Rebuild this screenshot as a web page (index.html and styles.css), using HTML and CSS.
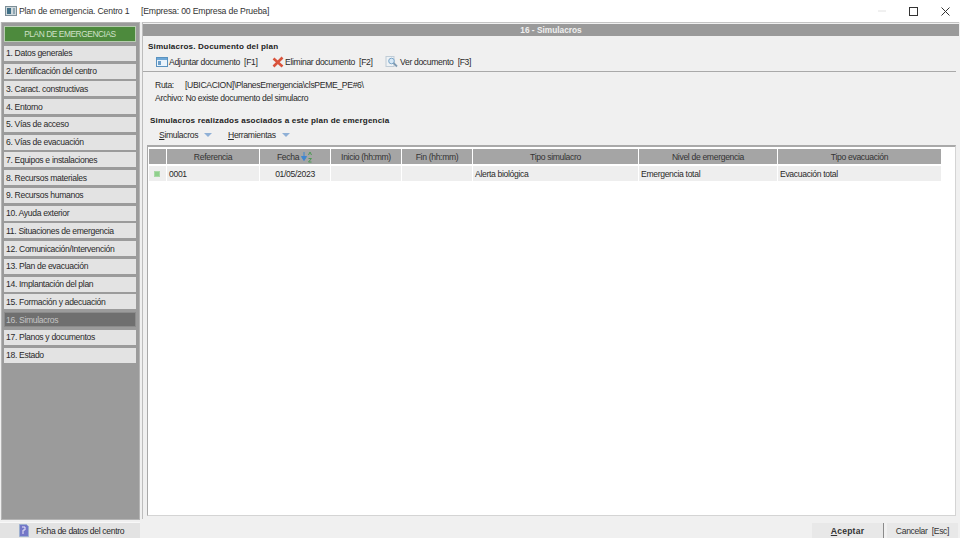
FILE: index.html
```html
<!DOCTYPE html>
<html lang="es">
<head>
<meta charset="utf-8">
<title>Plan de emergencia</title>
<link rel="stylesheet" href="styles.css">
</head>
<body>
<div class="window">
  <header class="titlebar">
    <svg class="appicon" width="12" height="12" viewBox="0 0 12 12"><rect x=".5" y="1.500" width="11" height="9" fill="#cfd8dc" stroke="#7d8f98"/><rect x="2" y="3" width="4" height="6" fill="#3f6f86"/><rect x="8" y="3" width="2" height="6" fill="#8fa7b3"/></svg>
    <span class="t-name">Plan de emergencia. Centro 1</span>
    <span class="t-company">[Empresa: 00 Empresa de Prueba]</span>
    <div class="winctl">
      <svg class="ctl" width="8" height="8" viewBox="0 0 8 8"><path d="M0 4h8" stroke="#e2e2e2"/></svg>
      <svg class="ctl" width="9" height="9" viewBox="0 0 9 9"><rect x=".5" y=".5" width="8" height="8" fill="none" stroke="#333"/></svg>
      <svg class="ctl" width="9" height="9" viewBox="0 0 9 9"><path d="M.5 .5l8 8M8.500 .5l-8 8" stroke="#333" fill="none"/></svg>
    </div>
  </header>
  <div class="content">
    <nav class="sidebar">
      <div class="navhead">PLAN DE EMERGENCIAS</div>
      <div class="navitem">1. Datos generales</div>
      <div class="navitem">2. Identificación del centro</div>
      <div class="navitem">3. Caract. constructivas</div>
      <div class="navitem">4. Entorno</div>
      <div class="navitem">5. Vías de acceso</div>
      <div class="navitem">6. Vías de evacuación</div>
      <div class="navitem">7. Equipos e instalaciones</div>
      <div class="navitem">8. Recursos materiales</div>
      <div class="navitem">9. Recursos humanos</div>
      <div class="navitem">10. Ayuda exterior</div>
      <div class="navitem">11. Situaciones de emergencia</div>
      <div class="navitem">12. Comunicación/Intervención</div>
      <div class="navitem">13. Plan de evacuación</div>
      <div class="navitem">14. Implantación del plan</div>
      <div class="navitem">15. Formación y adecuación</div>
      <div class="navitem active">16. Simulacros</div>
      <div class="navitem">17. Planos y documentos</div>
      <div class="navitem">18. Estado</div>
    </nav>
    <main class="panel">
      <div class="panelhead">16 - Simulacros</div>
      <h2 class="sec sec1">Simulacros. Documento del plan</h2>
      <div class="toolbar">
        <span class="tool t1"><svg width="12" height="12" viewBox="0 0 12 12"><rect x=".5" y="1.500" width="11" height="9" fill="#eaf3fb" stroke="#5a92bf"/><rect x="1" y="2" width="10" height="2" fill="#6ea8d8"/><rect x="2" y="5" width="3" height="4" fill="#6c9fca"/></svg>Adjuntar documento&nbsp; [F1]</span>
        <span class="tool t2"><svg width="12" height="12" viewBox="0 0 12 12"><path d="M1.500 2.500l9 8M10.500 1.500l-9 9" stroke="#d9533c" stroke-width="2.600" fill="none"/></svg>Eliminar documento&nbsp; [F2]</span>
        <span class="tool t3"><svg width="14" height="12" viewBox="0 0 14 12"><rect x="1" y="0.500" width="8" height="10" fill="#eef2f5" stroke="#c0ccd6"/><circle cx="6.500" cy="5" r="2.800" fill="#d8e9f7" stroke="#7aa5c8"/><path d="M8.500 7l3.500 3.500" stroke="#7f9bb3" stroke-width="1.800"/></svg>Ver documento&nbsp; [F3]</span>
      </div>
      <div class="info">
        <div class="inforow"><span class="lbl">Ruta:</span><span>[UBICACION]\PlanesEmergencia\clsPEME_PE#6\</span></div>
        <div class="inforow"><span>Archivo: No existe documento del simulacro</span></div>
      </div>
      <h2 class="sec sec2">Simulacros realizados asociados a este plan de emergencia</h2>
      <div class="menubar">
        <span class="menu m1"><u>S</u>imulacros<i class="caret"></i></span>
        <span class="menu m2"><u>H</u>erramientas<i class="caret"></i></span>
      </div>
      <section class="tablebox">
        <div class="grid">
          <div class="th"></div>
          <div class="th">Referencia</div>
          <div class="th">Fecha<svg class="sort" width="12" height="12" viewBox="0 0 12 12"><path d="M3 1v5M.5 5.500l2.500 4 2.500-4z" stroke="#3f86d0" fill="#3f86d0"/><path d="M7.500 4l1.500-3 1.500 3M7.500 7.500h3l-3 3.500h3" stroke="#4d9a55" fill="none"/></svg></div>
          <div class="th">Inicio (hh:mm)</div>
          <div class="th">Fin (hh:mm)</div>
          <div class="th">Tipo simulacro</div>
          <div class="th">Nivel de emergencia</div>
          <div class="th">Tipo evacuación</div>
          <div class="td mark"><i class="dot"></i></div>
          <div class="td">0001</div>
          <div class="td center">01/05/2023</div>
          <div class="td"></div>
          <div class="td"></div>
          <div class="td">Alerta biológica</div>
          <div class="td">Emergencia total</div>
          <div class="td">Evacuación total</div>
        </div>
      </section>
    </main>
  </div>
  <footer class="bottombar">
    <div class="ficha"><svg width="10" height="13" viewBox="0 0 10 13"><path d="M.5 .5h7l2 2v10h-9z" fill="#7478c8" stroke="#9db0d0"/><path d="M3 3h3v3h-2v4" stroke="#ece6f8" fill="none"/></svg>Ficha de datos del centro</div>
    <div class="spacer"></div>
    <button class="btn ok"><u>A</u>ceptar</button>
    <button class="btn cancel">Cancelar&nbsp; [Esc]</button>
  </footer>
</div>
</body>
</html>
```
FILE: styles.css
```css
* { box-sizing: border-box; }
html, body { margin: 0; padding: 0; }
body {
  width: 960px;
  height: 538px;
  overflow: hidden;
  background: #f0f0f0;
  color: #2a2a2a;
  font-family: "Liberation Sans", Arial, sans-serif;
  font-size: 8.6px;
  letter-spacing: -.33px;
}
.window { display: flex; flex-direction: column; height: 538px; }

.titlebar {
  height: 22px;
  flex: none;
  background: #fff;
  display: flex;
  align-items: center;
  padding-left: 5px;
  font-size: 8.7px;
  letter-spacing: -.18px;
  color: #333;
}
.appicon { margin-right: 2px; }
.t-name { width: 122px; }
.winctl { margin-left: auto; display: flex; align-items: center; gap: 23px; padding-right: 10px; }
.ctl { display: block; }

.content { flex: 1; display: flex; min-height: 0; background: #f0f0f0; padding-left: 1px; }

.sidebar {
  width: 139px;
  flex: none;
  background: #9b9b9b;
  border: 1px solid #b4b4b4;
  padding: 3px 3px 0 2px;
  display: flex;
  flex-direction: column;
  gap: 2.76px;
}
.navhead {
  height: 16px;
  margin-bottom: 1px;
  background: #4d8a3d;
  border: 1px solid #b7cdb0;
  color: #cfe0c8;
  font-size: 8.4px;
  letter-spacing: -.45px;
  display: flex;
  align-items: center;
  justify-content: center;
}
.navitem {
  height: 15px;
  background: #e3e3e3;
  padding-left: 2px;
  display: flex;
  align-items: center;
  white-space: nowrap;
}
.navitem.active { background: #6f6f6f; color: #c4c4c4; border: 1px solid #8b8b8b; padding-left: 1px; }

.panel {
  flex: none;
  width: 817px;
  margin-left: 2px;
  height: 497px;
  background: #f0f0f0;
  border-left: 1px solid #bdbdbd;
  border-top: 1px solid #c4c4c4;
  display: flex;
  flex-direction: column;
}
.panelhead {
  height: 12px;
  margin-top: 1px;
  flex: none;
  background: #9a9a9a;
  color: #f0f0f0;
  font-weight: bold;
  font-size: 8.3px;
  letter-spacing: 0;
  display: flex;
  align-items: center;
  justify-content: center;
}
.sec {
  margin: 0;
  font-size: 8.1px;
  font-weight: bold;
  color: #222;
  white-space: nowrap;
  letter-spacing: .16px;
  line-height: 11px;
}
.sec1 { padding: 5px 0 0 5px; }
.sec2 { padding: 11px 0 0 7px; }

.toolbar {
  height: 16px;
  margin: 4px 3px 0 0;
  padding-left: 13px;
  border-bottom: 1px solid #a9a9a9;
  display: flex;
  align-items: flex-start;
  flex: none;
}
.tool { display: inline-flex; align-items: center; gap: 1px; height: 12px; white-space: nowrap; }
.tool svg { flex: none; }
.t1 { width: 116px; }
.t2 { width: 113px; }

.info { padding: 8px 0 0 12px; display: flex; flex-direction: column; gap: 2px; }
.inforow { height: 11px; line-height: 11px; display: flex; white-space: nowrap; }
.lbl { width: 30px; }

.menubar { display: flex; height: 15px; padding: 3px 0 0 16px; }
.menu { display: inline-flex; align-items: center; height: 11px; white-space: nowrap; }
.m1 { width: 69px; }
.caret {
  width: 0; height: 0;
  margin-left: 6px;
  border-left: 4px solid transparent;
  border-right: 4px solid transparent;
  border-top: 4px solid #8fb0d6;
}

.tablebox {
  flex: 1;
  margin: 4px 3px 3px 4px;
  background: #fff;
  border-top: 2px solid #a9a9a9;
  border-left: 1px solid #a9a9a9;
  border-right: 1px solid #d4d4d4;
  border-bottom: 1px solid #d4d4d4;
  padding: 2px 0 0 1px;
}
.grid {
  display: grid;
  grid-template-columns: 17px 92px 70px 70px 70px 165px 138px 163px;
  grid-auto-rows: 15px;
  column-gap: 1px;
  row-gap: 2px;
  width: max-content;
}
.th {
  background: #a5a5a5;
  display: flex;
  align-items: center;
  justify-content: center;
  color: #333;
  gap: 2px;
}
.td {
  background: #eeeeee;
  display: flex;
  align-items: center;
  padding-left: 2px;
  white-space: nowrap;
}
.td.center { justify-content: center; padding-left: 0; }
.td.mark { justify-content: center; padding-left: 0; padding-right: 1px; }
.dot { width: 6px; height: 6px; background: #8fd08c; border: 1px solid #a9d8a6; display: block; }

.bottombar {
  height: 18px;
  flex: none;
  display: flex;
  align-items: flex-end;
  background: #f0f0f0;
}
.ficha {
  width: 140px;
  height: 16px;
  background: #e3e3e3;
  display: flex;
  align-items: center;
  padding-left: 19px;
  gap: 7px;
  border-top: 1px solid #f8f8f8;
}
.spacer { flex: 1; }
.btn {
  font: inherit;
  letter-spacing: inherit;
  height: 15px;
  padding: 0;
  color: #333;
  border: 0;
  background: #e8e8e8;
}
.btn.ok { width: 72px; font-weight: bold; letter-spacing: .2px; border-right: 1px solid #8a8a8a; }
.btn.cancel { width: 71px; margin: 0 2px 0 3px; }
```
